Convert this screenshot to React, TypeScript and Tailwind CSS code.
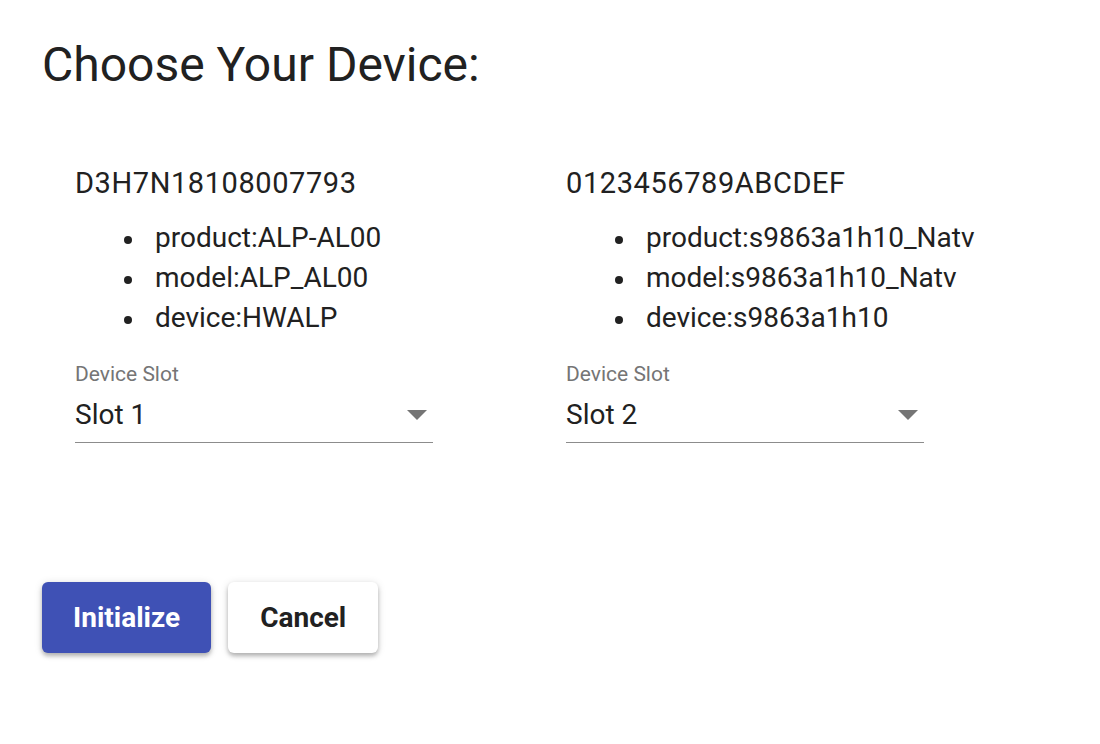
const devices = [
  {
    serial: "D3H7N18108007793",
    props: ["product:ALP-AL00", "model:ALP_AL00", "device:HWALP"],
    slot: "Slot 1",
  },
  {
    serial: "0123456789ABCDEF",
    props: ["product:s9863a1h10_Natv", "model:s9863a1h10_Natv", "device:s9863a1h10"],
    slot: "Slot 2",
  },
];

function SlotSelect({ value }: { value: string }) {
  return (
    <div className="w-[358px]">
      <div className="text-[21px] leading-none text-[#757575]">Device Slot</div>
      <div className="mt-[16px] flex items-center justify-between border-b border-[#8c8c8c] pb-[13px]">
        <span className="text-[28px] leading-none text-[#212121]">{value}</span>
        <svg width="20" height="10" viewBox="0 0 20 10" className="mr-[6px]">
          <path d="M0 0 L10 10 L20 0 Z" fill="#757575" />
        </svg>
      </div>
    </div>
  );
}

export default function App() {
  return (
    <div className="min-h-screen bg-white px-[42px] pt-[41px] text-[#212121]" style={{ fontFamily: "Roboto, sans-serif" }}>
      <h1 className="text-[48px] font-normal leading-none">Choose Your Device:</h1>

      <div className="mt-[80px] flex pl-[33px]">
        {devices.map((d) => (
          <div key={d.serial} className="w-[491px]">
            <div className="text-[29px] leading-none tracking-[0.02em]">{d.serial}</div>
            <ul className="mt-[20px] pl-[49px] text-[28px] leading-[40px]">
              {d.props.map((p) => (
                <li key={p} className="flex items-center gap-[23px]">
                  <span className="mt-[4px] h-[8px] w-[8px] shrink-0 rounded-full bg-[#212121]" />
                  <span>{p}</span>
                </li>
              ))}
            </ul>
            <div className="mt-[26px]">
              <SlotSelect value={d.slot} />
            </div>
          </div>
        ))}
      </div>

      <div className="mt-[139px] flex gap-[17px]">
        <button className="h-[71px] rounded-[6px] bg-[#3f51b5] px-[31px] text-[28px] font-bold text-white shadow-[0_3px_4px_rgba(0,0,0,0.25),0_1px_8px_rgba(0,0,0,0.12)]">
          Initialize
        </button>
        <button className="h-[71px] rounded-[6px] bg-white px-[32px] text-[28px] font-bold text-[#212121] shadow-[0_3px_4px_rgba(0,0,0,0.25),0_1px_8px_rgba(0,0,0,0.12)]">
          Cancel
        </button>
      </div>
    </div>
  );
}
